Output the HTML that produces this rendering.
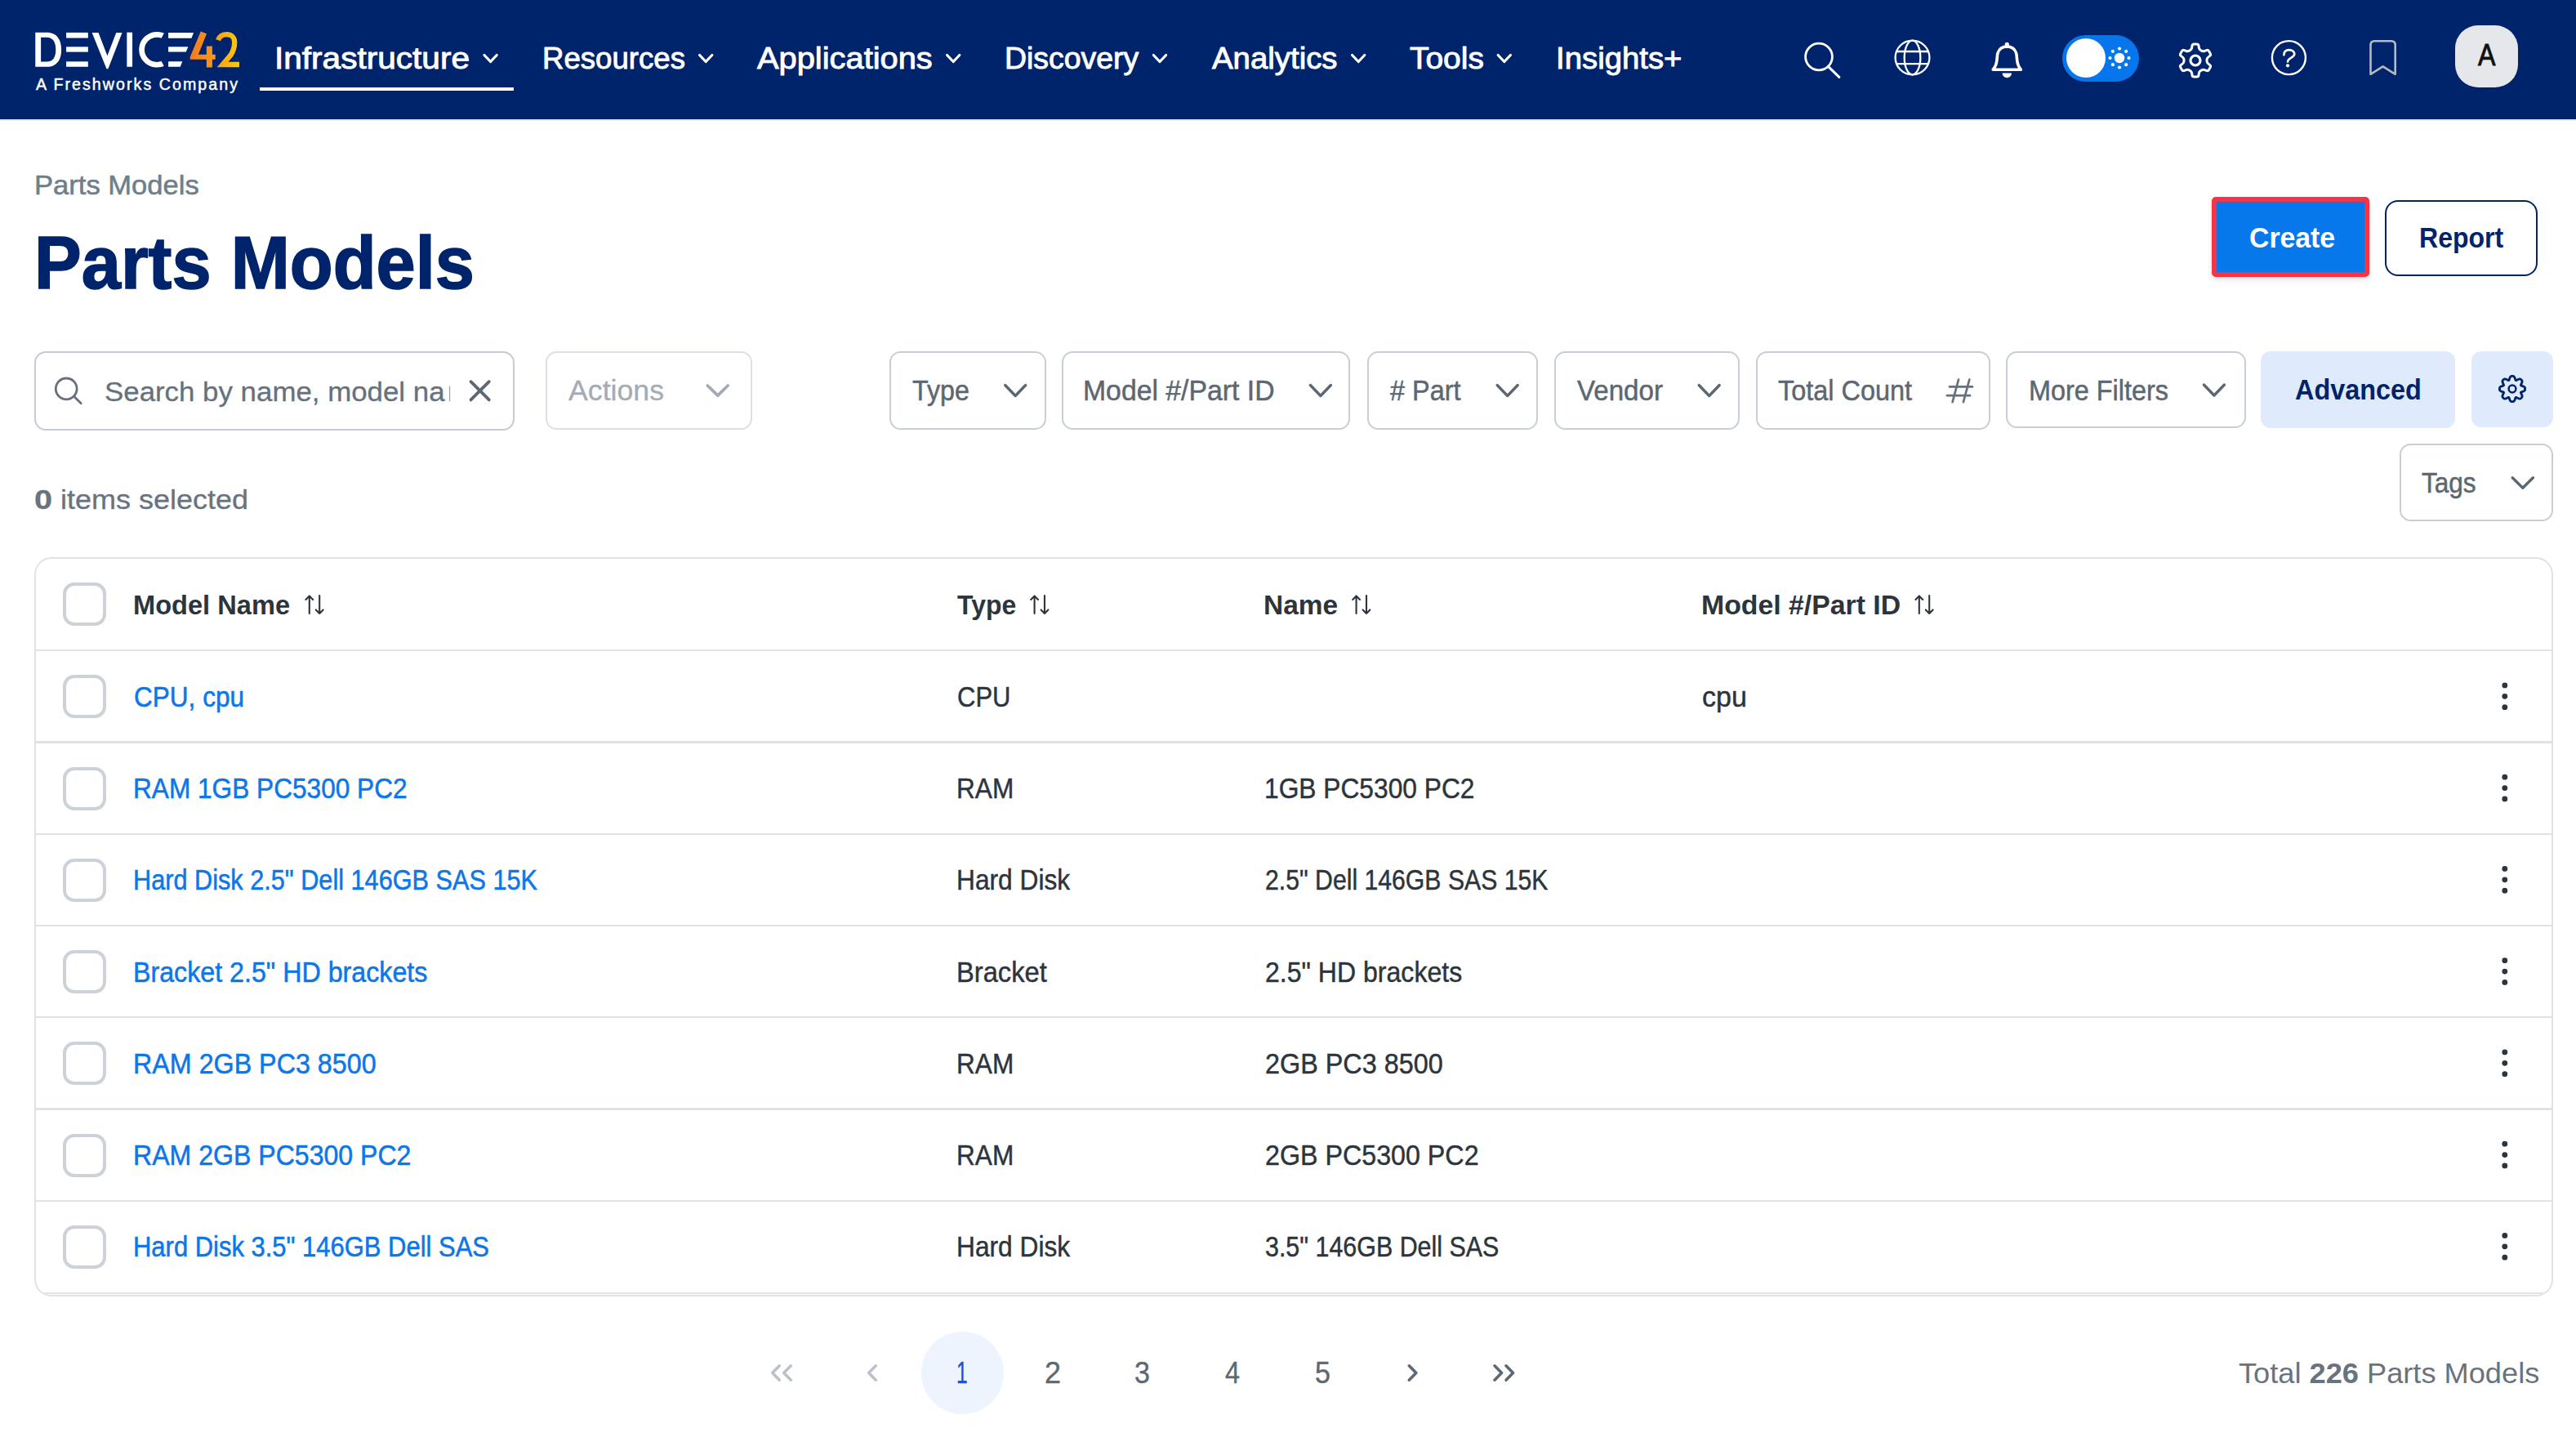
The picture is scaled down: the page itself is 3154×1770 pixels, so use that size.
<!DOCTYPE html>
<html><head><meta charset="utf-8"><title>Parts Models</title>
<style>
html,body{margin:0;padding:0;background:#fff}
body{width:3154px;height:1770px;position:relative;overflow:hidden;font-family:"Liberation Sans",sans-serif}
.t{position:absolute;white-space:nowrap;line-height:1;transform-origin:0 0}
.t b{font-weight:700}
.abs{position:absolute}
.box{position:absolute;box-sizing:border-box;border:2.1px solid #c7ced6;border-radius:13.5px;background:#fff}
.cb{position:absolute;box-sizing:border-box;width:53.2px;height:53.2px;left:76.6px;border:4px solid #cdd2d8;border-radius:14px;background:#fff}
.hl{position:absolute;left:0;width:3090px;height:2.2px;background:#dfe3e8}
svg{position:absolute;overflow:visible}
</style></head>
<body>
<!-- NAV BAR -->
<div class="abs" style="left:0;top:0;width:3154px;height:146px;background:#00246b"></div>
<div class="abs" style="left:0;top:146px;width:3154px;height:2.2px;background:#e4e7eb"></div>
<!-- logo -->
<svg style="left:30px;top:25px" width="280" height="100" viewBox="0 0 2576 920">
 <defs>
  <linearGradient id="og" gradientUnits="userSpaceOnUse" x1="1865" y1="0" x2="2420" y2="0">
   <stop offset="0" stop-color="#f37a20"/><stop offset="0.45" stop-color="#f8951d"/><stop offset="1" stop-color="#ffcb08"/>
  </linearGradient>
  <clipPath id="cc"><path d="M1250,100H1595.7L1537.5,210V451L1595.7,560H1250Z"/></clipPath>
 </defs>
 <g fill="#fff">
  <path fill-rule="evenodd" d="M122,135H250C370,135 415,222 415,328C415,438 370,522 250,522H122Z M185,192H250C325,192 352,252 352,328C352,408 325,465 250,465H185Z"/>
  <rect x="470" y="137" width="246" height="61"/><rect x="470" y="297" width="246" height="58"/><rect x="470" y="463" width="246" height="59"/>
  <path d="M760,137L833,137L933,397L1033,137L1100,137L942,545L924,545Z"/>
  <rect x="1153" y="135" width="62" height="387"/>
  <path d="M1620,137H1905L1881,199H1620Z M1620,297H1843L1820,355H1620Z M1620,463H1778L1755,522H1620Z"/>
 </g>
 <g clip-path="url(#cc)"><circle cx="1491" cy="329" r="170" fill="none" stroke="#fff" stroke-width="62" stroke-dasharray="840 1068" transform="rotate(50 1491 329)"/></g>
 <path fill="url(#og)" d="M1985,125L2052,150L1958,385H2050V290H2115V385H2150V440H2115V530H2050V440H1865V412Z"/>
 <path fill="none" stroke="url(#og)" stroke-width="58" stroke-linejoin="miter" stroke-miterlimit="6" d="M2180,222C2196,180 2234,158 2280,158C2332,158 2366,196 2366,246C2366,300 2352,350 2318,396L2231.6,497H2419"/>
</svg>
<!-- active underline -->
<div class="abs" style="left:318px;top:106.8px;width:311px;height:4px;background:#fff"></div>
<!-- nav chevrons -->
<svg style="left:0;top:0" width="3154" height="146" fill="none" stroke="#fff" stroke-width="3.2" stroke-linecap="round" stroke-linejoin="round">
 <polyline points="593,67.5 600.6,75.5 608.2,67.5"/>
 <polyline points="856.6,67.5 864.2,75.5 871.8,67.5"/>
 <polyline points="1159.6,67.5 1167.2,75.5 1174.8,67.5"/>
 <polyline points="1412.4,67.5 1420,75.5 1427.6,67.5"/>
 <polyline points="1655.6,67.5 1663.2,75.5 1670.8,67.5"/>
 <polyline points="1834.2,67.5 1841.8,75.5 1849.4,67.5"/>
</svg>
<!-- nav icons -->
<svg style="left:0;top:0" width="3154" height="146" fill="none" stroke="#fff" stroke-linecap="round" stroke-linejoin="round">
 <!-- search -->
 <circle cx="2227" cy="69.5" r="16.4" stroke-width="2.8"/><line x1="2239.2" y1="82.2" x2="2251.8" y2="94.4" stroke-width="3"/>
 <!-- globe -->
 <g stroke-width="2.3"><circle cx="2341.5" cy="70.5" r="20.9"/><ellipse cx="2341.5" cy="70.5" rx="9.8" ry="20.9"/><line x1="2322.5" y1="63" x2="2360.5" y2="63"/><line x1="2322.5" y1="78.2" x2="2360.5" y2="78.2"/></g>
 <!-- bell -->
 <g stroke-width="3.6"><path d="M2440.2,85.2C2446.8,78.5 2444.3,70.5 2446,65C2447.8,59.5 2452.4,57 2457.3,57C2462.2,57 2466.8,59.5 2468.6,65C2470.3,70.5 2467.8,78.5 2474.4,85.2Z"/></g>
 <line x1="2457.3" y1="54.4" x2="2457.3" y2="56.5" stroke-width="5.2"/>
 <path d="M2451.6,89.6H2463A5.7,5.7 0 0 1 2451.6,89.6Z" fill="#fff" stroke="none"/>
 <!-- help -->
 <circle cx="2802.4" cy="70.6" r="20.5" stroke-width="2.4"/>
 <path d="M2796.4,67.3C2796.4,63 2799,61.1 2802.8,61.1C2806.6,61.1 2809.2,63.3 2809.2,66.3C2809.2,70.8 2801,70.4 2801,75.6" stroke-width="2.6"/>
 <circle cx="2801" cy="80.3" r="2.1" fill="#fff" stroke="none"/>
 <!-- bookmark -->
 <path d="M2902.5,90.8V54.6A4.4,4.4 0 0 1 2906.9,50.2H2928.3A4.4,4.4 0 0 1 2932.7,54.6V90.8L2917.6,81.4Z" stroke="#b9b9b9" stroke-width="2.6"/>
</svg>
<!-- gear (nav) -->
<svg style="left:2663.5px;top:49.6px" width="48" height="48" viewBox="-24 -24 48 48" fill="none" stroke="#fff" stroke-width="3" stroke-linejoin="round">
 <path d="M-6.47,-12.45Q-4.56,-13.55 -4.31,-15.74L-4.07,-17.85Q-3.82,-20.04 -1.62,-20.04L1.62,-20.04Q3.82,-20.04 4.07,-17.85L4.31,-15.74Q4.56,-13.55 6.47,-12.45L7.55,-11.83Q9.46,-10.73 11.47,-11.60L13.43,-12.45Q15.44,-13.33 16.54,-11.42L18.17,-8.61Q19.27,-6.71 17.50,-5.40L15.79,-4.14Q14.02,-2.83 14.02,-0.63L14.02,0.63Q14.02,2.83 15.79,4.14L17.50,5.40Q19.27,6.71 18.17,8.61L16.54,11.42Q15.44,13.33 13.43,12.45L11.47,11.60Q9.46,10.73 7.55,11.83L6.47,12.45Q4.56,13.55 4.31,15.74L4.07,17.85Q3.82,20.04 1.62,20.04L-1.62,20.04Q-3.82,20.04 -4.07,17.85L-4.31,15.74Q-4.56,13.55 -6.47,12.45L-7.55,11.83Q-9.46,10.73 -11.47,11.60L-13.43,12.45Q-15.44,13.33 -16.54,11.42L-18.17,8.61Q-19.27,6.71 -17.50,5.40L-15.79,4.14Q-14.02,2.83 -14.02,0.63L-14.02,-0.63Q-14.02,-2.83 -15.79,-4.14L-17.50,-5.40Q-19.27,-6.71 -18.17,-8.61L-16.54,-11.42Q-15.44,-13.33 -13.43,-12.45L-11.47,-11.60Q-9.46,-10.73 -7.55,-11.83Z"/><circle r="6" stroke-width="3.2"/>
</svg>
<!-- toggle -->
<div class="abs" style="left:2524.7px;top:42.7px;width:94.5px;height:57.4px;border-radius:29px;background:#0676ec"></div>
<div class="abs" style="left:2529.7px;top:46.6px;width:48.7px;height:48.6px;border-radius:50%;background:#fff"></div>
<svg style="left:2575.3px;top:51.4px" width="40" height="40" viewBox="-20 -20 40 40" fill="#fff">
 <circle r="6.25"/>
 <circle cx="11.5" cy="0" r="2.1"/><circle cx="-11.5" cy="0" r="2.1"/><circle cx="0" cy="11.5" r="2.1"/><circle cx="0" cy="-11.5" r="2.1"/>
 <circle cx="8.13" cy="8.13" r="2.1"/><circle cx="-8.13" cy="8.13" r="2.1"/><circle cx="8.13" cy="-8.13" r="2.1"/><circle cx="-8.13" cy="-8.13" r="2.1"/>
</svg>
<!-- avatar -->
<div class="abs" style="left:3005.8px;top:30.8px;width:77.3px;height:76.2px;border-radius:28px;background:#e6e7eb"></div>

<!-- HEADER BUTTONS -->
<div class="abs" style="left:2708.2px;top:241.3px;width:192.7px;height:97.8px;box-sizing:border-box;border:6px solid #f63448;border-radius:5px;background:#0777ec;box-shadow:0 3px 6px rgba(0,0,0,.13)"></div>
<div class="abs" style="left:2920px;top:245.2px;width:186.9px;height:92.4px;box-sizing:border-box;border:2.6px solid #00246b;border-radius:16px;background:#fff"></div>

<!-- FILTER BAR -->
<div class="box" style="left:42.2px;top:430px;width:587.4px;height:96.8px;border-color:#c5ccd4;border-radius:14px"></div>
<div class="box" style="left:668.1px;top:430.1px;width:252.7px;height:95.6px;border-color:#dce0e6"></div>
<div class="box" style="left:1089.3px;top:430px;width:191.3px;height:95.5px"></div>
<div class="box" style="left:1300px;top:430px;width:353px;height:95.5px"></div>
<div class="box" style="left:1674px;top:430px;width:209px;height:95.5px"></div>
<div class="box" style="left:1903px;top:430px;width:226.5px;height:95.5px"></div>
<div class="box" style="left:2150.3px;top:430px;width:287px;height:95.5px"></div>
<div class="box" style="left:2456.4px;top:430.2px;width:293.3px;height:93.8px"></div>
<div class="abs" style="left:2767.9px;top:429.9px;width:238.1px;height:94.1px;border-radius:12px;background:#dfebfd"></div>
<div class="abs" style="left:3025.8px;top:429.9px;width:100.1px;height:93.6px;border-radius:12px;background:#dfebfd"></div>
<div class="box" style="left:2938px;top:543.1px;width:187.9px;height:94.6px"></div>
<svg style="left:0;top:400px" width="3154" height="260" viewBox="0 400 3154 260" fill="none" stroke-linecap="round" stroke-linejoin="round">
 <!-- search icon -->
 <g stroke="#66717c" stroke-width="2.8"><circle cx="81.2" cy="475.9" r="12.9"/><line x1="90.6" y1="485.3" x2="99.2" y2="493.8"/></g>
 <!-- clear X -->
 <g stroke="#5c6772" stroke-width="3.8"><line x1="576.5" y1="467.2" x2="598.8" y2="489.4"/><line x1="598.8" y1="467.2" x2="576.5" y2="489.4"/></g>
 <rect x="549.9" y="472.6" width="1.3" height="18.6" fill="#9aa3ac" stroke="none"/>
 <!-- chevrons -->
 <g stroke="#a3abb4" stroke-width="3.8"><polyline points="866.3,472 878.8,484.2 891.2,472"/></g>
 <g stroke="#5c6772" stroke-width="3.4">
  <polyline points="1230.7,471.5 1243.2,484.5 1255.7,471.5"/>
  <polyline points="1604.4,471.5 1616.9,484.5 1629.4,471.5"/>
  <polyline points="1833.2,471.5 1845.7,484.5 1858.2,471.5"/>
  <polyline points="2080.2,471.5 2092.7,484.5 2105.2,471.5"/>
  <polyline points="2698.4,471 2710.9,484 2723.4,471"/>
  <polyline points="3076.2,584.8 3088.8,597.2 3101.4,584.8"/>
 </g>
 <!-- # icon -->
 <g stroke="#66717c" stroke-width="2.7"><line x1="2398" y1="464.6" x2="2390.6" y2="492.2"/><line x1="2411.3" y1="464.6" x2="2403.9" y2="492.2"/><line x1="2387" y1="473.4" x2="2415" y2="473.4"/><line x1="2384" y1="484.2" x2="2412" y2="484.2"/></g>
</svg>
<!-- gear (filter) -->
<svg style="left:3056.1px;top:456.2px" width="40" height="40" viewBox="-20 -20 40 40" fill="none" stroke="#00246b" stroke-width="2.8" stroke-linejoin="round">
 <path d="M0.00,-15.65L0.41,-15.64L0.82,-15.61L1.22,-15.52L1.61,-15.36L1.99,-15.11L2.34,-14.75L2.65,-14.30L2.92,-13.76L3.16,-13.16L3.36,-12.54L3.54,-11.94L3.70,-11.40L3.88,-10.95L4.08,-10.62L4.32,-10.44L4.63,-10.40L5.00,-10.48L5.44,-10.68L5.94,-10.94L6.49,-11.24L7.07,-11.54L7.66,-11.80L8.24,-11.98L8.78,-12.08L9.28,-12.09L9.72,-12.00L10.11,-11.84L10.46,-11.61L10.77,-11.35L11.07,-11.07L11.35,-10.77L11.61,-10.46L11.84,-10.11L12.00,-9.72L12.09,-9.28L12.08,-8.78L11.98,-8.24L11.80,-7.66L11.54,-7.07L11.24,-6.49L10.94,-5.94L10.68,-5.44L10.48,-5.00L10.40,-4.63L10.44,-4.32L10.62,-4.08L10.95,-3.88L11.40,-3.70L11.94,-3.54L12.54,-3.36L13.16,-3.16L13.76,-2.92L14.30,-2.65L14.75,-2.34L15.11,-1.99L15.36,-1.61L15.52,-1.22L15.61,-0.82L15.64,-0.41L15.65,-0.00L15.64,0.41L15.61,0.82L15.52,1.22L15.36,1.61L15.11,1.99L14.75,2.34L14.30,2.65L13.76,2.92L13.16,3.16L12.54,3.36L11.94,3.54L11.40,3.70L10.95,3.88L10.62,4.08L10.44,4.32L10.40,4.63L10.48,5.00L10.68,5.44L10.94,5.94L11.24,6.49L11.54,7.07L11.80,7.66L11.98,8.24L12.08,8.78L12.09,9.28L12.00,9.72L11.84,10.11L11.61,10.46L11.35,10.77L11.07,11.07L10.77,11.35L10.46,11.61L10.11,11.84L9.72,12.00L9.28,12.09L8.78,12.08L8.24,11.98L7.66,11.80L7.07,11.54L6.49,11.24L5.94,10.94L5.44,10.68L5.00,10.48L4.63,10.40L4.32,10.44L4.08,10.62L3.88,10.95L3.70,11.40L3.54,11.94L3.36,12.54L3.16,13.16L2.92,13.76L2.65,14.30L2.34,14.75L1.99,15.11L1.61,15.36L1.22,15.52L0.82,15.61L0.41,15.64L0.00,15.65L-0.41,15.64L-0.82,15.61L-1.22,15.52L-1.61,15.36L-1.99,15.11L-2.34,14.75L-2.65,14.30L-2.92,13.76L-3.16,13.16L-3.36,12.54L-3.54,11.94L-3.70,11.40L-3.88,10.95L-4.08,10.62L-4.32,10.44L-4.63,10.40L-5.00,10.48L-5.44,10.68L-5.94,10.94L-6.49,11.24L-7.07,11.54L-7.66,11.80L-8.24,11.98L-8.78,12.08L-9.28,12.09L-9.72,12.00L-10.11,11.84L-10.46,11.61L-10.77,11.35L-11.07,11.07L-11.35,10.77L-11.61,10.46L-11.84,10.11L-12.00,9.72L-12.09,9.28L-12.08,8.78L-11.98,8.24L-11.80,7.66L-11.54,7.07L-11.24,6.49L-10.94,5.94L-10.68,5.44L-10.48,5.00L-10.40,4.63L-10.44,4.32L-10.62,4.08L-10.95,3.88L-11.40,3.70L-11.94,3.54L-12.54,3.36L-13.16,3.16L-13.76,2.92L-14.30,2.65L-14.75,2.34L-15.11,1.99L-15.36,1.61L-15.52,1.22L-15.61,0.82L-15.64,0.41L-15.65,0.00L-15.64,-0.41L-15.61,-0.82L-15.52,-1.22L-15.36,-1.61L-15.11,-1.99L-14.75,-2.34L-14.30,-2.65L-13.76,-2.92L-13.16,-3.16L-12.54,-3.36L-11.94,-3.54L-11.40,-3.70L-10.95,-3.88L-10.62,-4.08L-10.44,-4.32L-10.40,-4.63L-10.48,-5.00L-10.68,-5.44L-10.94,-5.94L-11.24,-6.49L-11.54,-7.07L-11.80,-7.66L-11.98,-8.24L-12.08,-8.78L-12.09,-9.28L-12.00,-9.72L-11.84,-10.11L-11.61,-10.46L-11.35,-10.77L-11.07,-11.07L-10.77,-11.35L-10.46,-11.61L-10.11,-11.84L-9.72,-12.00L-9.28,-12.09L-8.78,-12.08L-8.24,-11.98L-7.66,-11.80L-7.07,-11.54L-6.49,-11.24L-5.94,-10.94L-5.44,-10.68L-5.00,-10.48L-4.63,-10.40L-4.32,-10.44L-4.08,-10.62L-3.88,-10.95L-3.70,-11.40L-3.54,-11.94L-3.36,-12.54L-3.16,-13.16L-2.92,-13.76L-2.65,-14.30L-2.34,-14.75L-1.99,-15.11L-1.61,-15.36L-1.22,-15.52L-0.82,-15.61L-0.41,-15.64Z"/><circle r="4.4" stroke-width="2.5"/>
</svg>

<!-- TABLE -->
<div class="abs" style="left:42.2px;top:681.7px;width:3084.2px;height:905.6px;box-sizing:border-box;border:2.2px solid #dfe3e8;border-radius:21px;overflow:hidden">
<div class="hl" style="top:111.50px"></div>
<div class="hl" style="top:223.75px"></div>
<div class="hl" style="top:336.00px"></div>
<div class="hl" style="top:448.25px"></div>
<div class="hl" style="top:560.50px"></div>
<div class="hl" style="top:672.75px"></div>
<div class="hl" style="top:785.00px"></div>
<div class="hl" style="top:898.15px"></div>
</div>
<div class="cb" style="top:712.8px"></div>
<div class="cb" style="top:826.30px"></div>
<div class="cb" style="top:938.55px"></div>
<div class="cb" style="top:1050.80px"></div>
<div class="cb" style="top:1163.05px"></div>
<div class="cb" style="top:1275.30px"></div>
<div class="cb" style="top:1387.55px"></div>
<div class="cb" style="top:1499.80px"></div>

<svg style="left:0;top:790px" width="3154" height="800" viewBox="0 790 3154 800" fill="#2c343c"><circle cx="3066.8" cy="838.90" r="3.4"/><circle cx="3066.8" cy="852.30" r="3.4"/><circle cx="3066.8" cy="865.70" r="3.4"/><circle cx="3066.8" cy="951.15" r="3.4"/><circle cx="3066.8" cy="964.55" r="3.4"/><circle cx="3066.8" cy="977.95" r="3.4"/><circle cx="3066.8" cy="1063.40" r="3.4"/><circle cx="3066.8" cy="1076.80" r="3.4"/><circle cx="3066.8" cy="1090.20" r="3.4"/><circle cx="3066.8" cy="1175.65" r="3.4"/><circle cx="3066.8" cy="1189.05" r="3.4"/><circle cx="3066.8" cy="1202.45" r="3.4"/><circle cx="3066.8" cy="1287.90" r="3.4"/><circle cx="3066.8" cy="1301.30" r="3.4"/><circle cx="3066.8" cy="1314.70" r="3.4"/><circle cx="3066.8" cy="1400.15" r="3.4"/><circle cx="3066.8" cy="1413.55" r="3.4"/><circle cx="3066.8" cy="1426.95" r="3.4"/><circle cx="3066.8" cy="1512.40" r="3.4"/><circle cx="3066.8" cy="1525.80" r="3.4"/><circle cx="3066.8" cy="1539.20" r="3.4"/></svg>

<svg style="left:0;top:700px" width="3154" height="80" viewBox="0 700 3154 80" fill="none" stroke="#2c343c" stroke-width="2.1" stroke-linecap="round" stroke-linejoin="round"><g transform="translate(373.8 0)"><path d="M5,750.9V729.5M0.6,734L5,729.5L9.4,734"/><path d="M17.4,729.1V750.9M13,746.4L17.4,750.9L21.8,746.4"/></g><g transform="translate(1261.6 0)"><path d="M5,750.9V729.5M0.6,734L5,729.5L9.4,734"/><path d="M17.4,729.1V750.9M13,746.4L17.4,750.9L21.8,746.4"/></g><g transform="translate(1655.6 0)"><path d="M5,750.9V729.5M0.6,734L5,729.5L9.4,734"/><path d="M17.4,729.1V750.9M13,746.4L17.4,750.9L21.8,746.4"/></g><g transform="translate(2344.8 0)"><path d="M5,750.9V729.5M0.6,734L5,729.5L9.4,734"/><path d="M17.4,729.1V750.9M13,746.4L17.4,750.9L21.8,746.4"/></g></svg>

<!-- PAGINATION -->
<div class="abs" style="left:1128px;top:1630px;width:100.8px;height:100.8px;border-radius:50%;background:#eef4fe"></div>
<svg style="left:0;top:1640px" width="3154" height="80" viewBox="0 1640 3154 80" fill="none" stroke-width="3.6" stroke-linecap="round" stroke-linejoin="round">
 <g stroke="#bcc2c9"><polyline points="954.3,1671.8 945.7,1680.5 954.3,1689.2"/><polyline points="968.3,1671.8 959.7,1680.5 968.3,1689.2"/><polyline points="1072.3,1671.8 1063.7,1680.5 1072.3,1689.2"/></g>
 <g stroke="#5d6873"><polyline points="1725.3,1671.8 1733.9,1680.5 1725.3,1689.2"/><polyline points="1830,1671.8 1838.6,1680.5 1830,1689.2"/><polyline points="1844,1671.8 1852.6,1680.5 1844,1689.2"/></g>
</svg>
<span class="t" style="left:43.90px;top:94.20px;font-size:19.6px;color:#fff;-webkit-text-stroke:0.45px #fff;letter-spacing:2.058px;">A Freshworks Company</span>
<span class="t" style="left:335.61px;top:52.66px;font-size:37px;color:#fff;-webkit-text-stroke:0.9px #fff;transform:scaleX(1.0963);">Infrastructure</span>
<span class="t" style="left:664.02px;top:52.66px;font-size:37px;color:#fff;-webkit-text-stroke:0.9px #fff;transform:scaleX(0.9897);">Resources</span>
<span class="t" style="left:926.78px;top:52.66px;font-size:37px;color:#fff;-webkit-text-stroke:0.9px #fff;transform:scaleX(1.0765);">Applications</span>
<span class="t" style="left:1230.28px;top:52.66px;font-size:37px;color:#fff;-webkit-text-stroke:0.9px #fff;transform:scaleX(1.0106);">Discovery</span>
<span class="t" style="left:1484.04px;top:52.66px;font-size:37px;color:#fff;-webkit-text-stroke:0.9px #fff;transform:scaleX(1.0369);">Analytics</span>
<span class="t" style="left:1725.90px;top:52.66px;font-size:37px;color:#fff;-webkit-text-stroke:0.9px #fff;transform:scaleX(1.0523);">Tools</span>
<span class="t" style="left:1904.69px;top:52.66px;font-size:37px;color:#fff;-webkit-text-stroke:0.9px #fff;transform:scaleX(1.0359);">Insights+</span>
<span class="t" style="left:3033.67px;top:49.26px;font-size:37px;color:#111;-webkit-text-stroke:0.9px #111;transform:scaleX(0.8692);">A</span>
<span class="t" style="left:42.07px;top:209.00px;font-size:34px;color:#6f7e8b;-webkit-text-stroke:0.55px #6f7e8b;transform:scaleX(1.0168);">Parts Models</span>
<span class="t" style="left:42.04px;top:276.22px;font-size:91px;color:#00246b;font-weight:700;-webkit-text-stroke:1.6px #00246b;transform:scaleX(0.9515);">Parts Models</span>
<span class="t" style="left:2753.84px;top:273.16px;font-size:35px;color:#fff;font-weight:700;transform:scaleX(0.9645);">Create</span>
<span class="t" style="left:2961.57px;top:273.16px;font-size:35px;color:#00246b;font-weight:700;transform:scaleX(0.9153);">Report</span>
<span class="t" style="left:128.07px;top:462.00px;font-size:34px;color:#66717c;-webkit-text-stroke:0.3px #66717c;transform:scaleX(1.0251);">Search by name, model na</span>
<span class="t" style="left:696.10px;top:460.88px;font-size:34.5px;color:#a3abb4;-webkit-text-stroke:0.3px #a3abb4;transform:scaleX(1.0345);">Actions</span>
<span class="t" style="left:1117.00px;top:460.16px;font-size:35px;color:#5c6772;-webkit-text-stroke:0.5px #5c6772;transform:scaleX(0.9200);">Type</span>
<span class="t" style="left:1325.57px;top:460.16px;font-size:35px;color:#5c6772;-webkit-text-stroke:0.5px #5c6772;transform:scaleX(0.9646);">Model #/Part ID</span>
<span class="t" style="left:1701.93px;top:460.16px;font-size:35px;color:#5c6772;-webkit-text-stroke:0.5px #5c6772;transform:scaleX(0.9263);"># Part</span>
<span class="t" style="left:1931.00px;top:460.16px;font-size:35px;color:#5c6772;-webkit-text-stroke:0.5px #5c6772;transform:scaleX(0.9459);">Vendor</span>
<span class="t" style="left:2177.00px;top:460.16px;font-size:35px;color:#5c6772;-webkit-text-stroke:0.5px #5c6772;transform:scaleX(0.9270);">Total Count</span>
<span class="t" style="left:2483.75px;top:460.16px;font-size:35px;color:#5c6772;-webkit-text-stroke:0.5px #5c6772;transform:scaleX(0.9253);">More Filters</span>
<span class="t" style="left:2809.57px;top:459.36px;font-size:35px;color:#00246b;font-weight:700;transform:scaleX(0.9255);">Advanced</span>
<span class="t" style="left:2964.90px;top:573.36px;font-size:35px;color:#5c6772;-webkit-text-stroke:0.5px #5c6772;transform:scaleX(0.9014);">Tags</span>
<span class="t" style="left:42.02px;top:595.33px;font-size:33.5px;color:#69737e;font-weight:700;-webkit-text-stroke:0.3px #69737e;transform:scaleX(1.1824);">0</span>
<span class="t" style="left:74.25px;top:595.33px;font-size:33.5px;color:#69737e;-webkit-text-stroke:0.3px #69737e;transform:scaleX(1.0739);">items selected</span>
<span class="t" style="left:163.39px;top:724.57px;font-size:32.5px;color:#2c343c;font-weight:700;transform:scaleX(1.0032);">Model Name</span>
<span class="t" style="left:1172.30px;top:724.57px;font-size:32.5px;color:#2c343c;font-weight:700;transform:scaleX(0.9822);">Type</span>
<span class="t" style="left:1547.44px;top:724.57px;font-size:32.5px;color:#2c343c;font-weight:700;transform:scaleX(1.0291);">Name</span>
<span class="t" style="left:2082.72px;top:724.57px;font-size:32.5px;color:#2c343c;font-weight:700;transform:scaleX(1.0397);">Model #/Part ID</span>
<span class="t" style="left:163.69px;top:835.78px;font-size:34.5px;color:#0d76e8;-webkit-text-stroke:0.55px #0d76e8;transform:scaleX(0.9145);">CPU, cpu</span>
<span class="t" style="left:1172.20px;top:835.78px;font-size:34.5px;color:#2c343c;-webkit-text-stroke:0.45px #2c343c;transform:scaleX(0.8986);">CPU</span>
<span class="t" style="left:2083.82px;top:835.78px;font-size:34.5px;color:#2c343c;-webkit-text-stroke:0.45px #2c343c;transform:scaleX(0.9849);">cpu</span>
<span class="t" style="left:162.77px;top:948.03px;font-size:34.5px;color:#0d76e8;-webkit-text-stroke:0.55px #0d76e8;transform:scaleX(0.9163);">RAM 1GB PC5300 PC2</span>
<span class="t" style="left:1171.27px;top:948.03px;font-size:34.5px;color:#2c343c;-webkit-text-stroke:0.45px #2c343c;transform:scaleX(0.9164);">RAM</span>
<span class="t" style="left:1548.46px;top:948.03px;font-size:34.5px;color:#2c343c;-webkit-text-stroke:0.45px #2c343c;transform:scaleX(0.9195);">1GB PC5300 PC2</span>
<span class="t" style="left:162.82px;top:1060.28px;font-size:34.5px;color:#0d76e8;-webkit-text-stroke:0.55px #0d76e8;transform:scaleX(0.8890);">Hard Disk 2.5&quot; Dell 146GB SAS 15K</span>
<span class="t" style="left:1171.26px;top:1060.28px;font-size:34.5px;color:#2c343c;-webkit-text-stroke:0.45px #2c343c;transform:scaleX(0.9193);">Hard Disk</span>
<span class="t" style="left:1549.42px;top:1060.28px;font-size:34.5px;color:#2c343c;-webkit-text-stroke:0.45px #2c343c;transform:scaleX(0.8752);">2.5&quot; Dell 146GB SAS 15K</span>
<span class="t" style="left:162.73px;top:1172.53px;font-size:34.5px;color:#0d76e8;-webkit-text-stroke:0.55px #0d76e8;transform:scaleX(0.9333);">Bracket 2.5&quot; HD brackets</span>
<span class="t" style="left:1171.21px;top:1172.53px;font-size:34.5px;color:#2c343c;-webkit-text-stroke:0.45px #2c343c;transform:scaleX(0.9470);">Bracket</span>
<span class="t" style="left:1549.37px;top:1172.53px;font-size:34.5px;color:#2c343c;-webkit-text-stroke:0.45px #2c343c;transform:scaleX(0.9291);">2.5&quot; HD brackets</span>
<span class="t" style="left:162.73px;top:1284.78px;font-size:34.5px;color:#0d76e8;-webkit-text-stroke:0.55px #0d76e8;transform:scaleX(0.9348);">RAM 2GB PC3 8500</span>
<span class="t" style="left:1171.27px;top:1284.78px;font-size:34.5px;color:#2c343c;-webkit-text-stroke:0.45px #2c343c;transform:scaleX(0.9164);">RAM</span>
<span class="t" style="left:1549.36px;top:1284.78px;font-size:34.5px;color:#2c343c;-webkit-text-stroke:0.45px #2c343c;transform:scaleX(0.9381);">2GB PC3 8500</span>
<span class="t" style="left:162.74px;top:1397.03px;font-size:34.5px;color:#0d76e8;-webkit-text-stroke:0.55px #0d76e8;transform:scaleX(0.9295);">RAM 2GB PC5300 PC2</span>
<span class="t" style="left:1171.27px;top:1397.03px;font-size:34.5px;color:#2c343c;-webkit-text-stroke:0.45px #2c343c;transform:scaleX(0.9164);">RAM</span>
<span class="t" style="left:1549.37px;top:1397.03px;font-size:34.5px;color:#2c343c;-webkit-text-stroke:0.45px #2c343c;transform:scaleX(0.9342);">2GB PC5300 PC2</span>
<span class="t" style="left:162.81px;top:1509.28px;font-size:34.5px;color:#0d76e8;-webkit-text-stroke:0.55px #0d76e8;transform:scaleX(0.8973);">Hard Disk 3.5&quot; 146GB Dell SAS</span>
<span class="t" style="left:1171.26px;top:1509.28px;font-size:34.5px;color:#2c343c;-webkit-text-stroke:0.45px #2c343c;transform:scaleX(0.9193);">Hard Disk</span>
<span class="t" style="left:1549.42px;top:1509.28px;font-size:34.5px;color:#2c343c;-webkit-text-stroke:0.45px #2c343c;transform:scaleX(0.8814);">3.5&quot; 146GB Dell SAS</span>
<span class="t" style="left:1171.07px;top:1662.16px;font-size:37px;color:#1a4fd6;-webkit-text-stroke:0.4px #1a4fd6;transform:scaleX(0.6667);">1</span>
<span class="t" style="left:1278.78px;top:1662.16px;font-size:37px;color:#5d6873;-webkit-text-stroke:0.4px #5d6873;transform:scaleX(0.9722);">2</span>
<span class="t" style="left:1388.93px;top:1662.16px;font-size:37px;color:#5d6873;-webkit-text-stroke:0.4px #5d6873;transform:scaleX(0.9211);">3</span>
<span class="t" style="left:1500.25px;top:1662.16px;font-size:37px;color:#5d6873;-webkit-text-stroke:0.4px #5d6873;transform:scaleX(0.8750);">4</span>
<span class="t" style="left:1609.83px;top:1662.16px;font-size:37px;color:#5d6873;-webkit-text-stroke:0.4px #5d6873;transform:scaleX(0.9211);">5</span>
<span class="t" style="left:2741.20px;top:1663.58px;font-size:34.5px;color:#69737e;transform:scaleX(1.0494);">Total <b>226</b> Parts Models</span>
</body>
</html>
